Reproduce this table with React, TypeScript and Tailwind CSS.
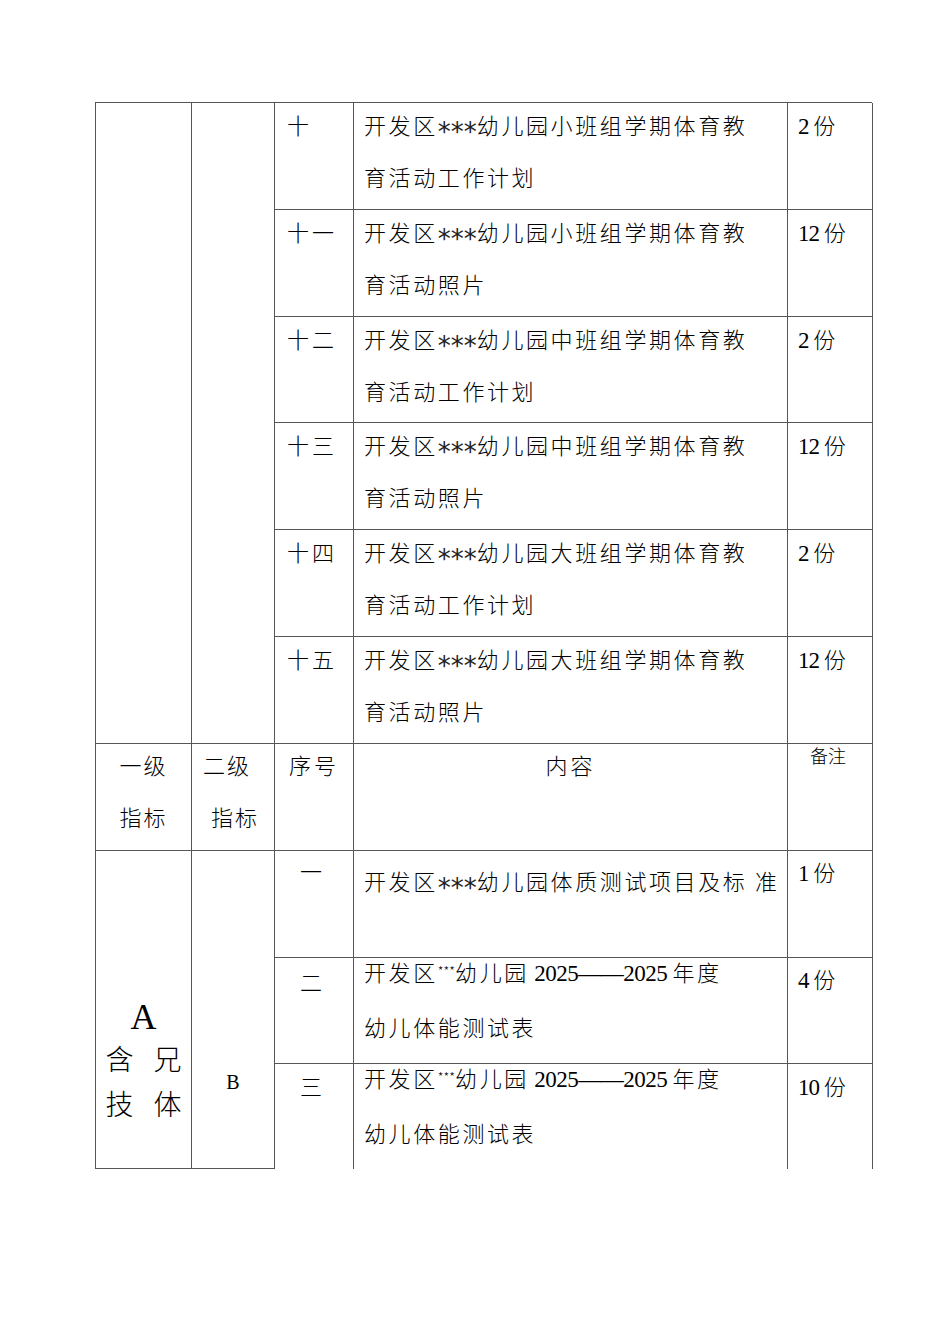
const cjk = "font-['Noto_Sans_CJK_SC',sans-serif] font-light";
const num = "font-['Liberation_Serif',serif]";
const cell = "border-r border-b border-[#555]";

const topRows = [
  { no: "十", head: "开发区", tail: "幼儿园小班组学期体育教", l2: "育活动工作计划", n: "2" },
  { no: "十一", head: "开发区", tail: "幼儿园小班组学期体育教", l2: "育活动照片", n: "12" },
  { no: "十二", head: "开发区", tail: "幼儿园中班组学期体育教", l2: "育活动工作计划", n: "2" },
  { no: "十三", head: "开发区", tail: "幼儿园中班组学期体育教", l2: "育活动照片", n: "12" },
  { no: "十四", head: "开发区", tail: "幼儿园大班组学期体育教", l2: "育活动工作计划", n: "2" },
  { no: "十五", head: "开发区", tail: "幼儿园大班组学期体育教", l2: "育活动照片", n: "12" },
];

function Stars() {
  return (
    <span className="inline-block translate-y-[7px] font-['DejaVu_Sans',sans-serif] text-[26px] font-normal leading-none tracking-normal text-[#222]">
      ***
    </span>
  );
}

function Count({ n }: { n: string }) {
  return (
    <span className="tracking-normal">
      <span className={`${num} text-[23px] tracking-[-1px]`}>{n}</span>
      <span className={cjk}> 份</span>
    </span>
  );
}

function YearLine() {
  return (
    <div>
      开发区<span className="align-top text-[13px] tracking-normal">***</span>幼儿园
      <span className={`${num} text-[23px] tracking-[-0.5px]`}> 2025——2025 </span>年度
    </div>
  );
}

export default function App() {
  return (
    <div className={`min-h-[1344px] w-[950px] bg-white pl-[95px] pt-[102px] text-[22px] text-black ${cjk}`}>
      <div className="grid w-[777px] grid-cols-[96px_83px_79px_434px_85px] grid-rows-[107px_107px_106px_107px_107px_107px_107px_107px_106px_105px] border-l border-t border-[#555]">
        {/* top section */}
        <div className={`${cell} row-span-6`} />
        <div className={`${cell} row-span-6`} />
        {topRows.map((r) => (
          <div key={r.no} className="contents">
            <div className={`${cell} pl-[12px] leading-[52px] tracking-[3px]`}>
              <div className="-mt-[5px]">{r.no}</div>
            </div>
            <div className={`${cell} pl-[10px] leading-[52px] tracking-[2.6px]`}>
              <div className="-mt-[5px]">
                <div>
                  {r.head}
                  <Stars />
                  {r.tail}
                </div>
                <div>{r.l2}</div>
              </div>
            </div>
            <div className={`${cell} pl-[10px] leading-[52px]`}>
              <div className="-mt-[5px]">
                <Count n={r.n} />
              </div>
            </div>
          </div>
        ))}

        {/* header row */}
        <div className={`${cell} text-center leading-[52px] tracking-[2px]`}>
          <div className="-mt-[6px]">
            <div>一级</div>
            <div>指标</div>
          </div>
        </div>
        <div className={`${cell} leading-[52px] tracking-[2px]`}>
          <div className="-mt-[6px] pl-[11px]">
            <div>二级</div>
            <div className="pl-[8px]">指标</div>
          </div>
        </div>
        <div className={`${cell} pl-[14px] leading-[52px] tracking-[3px]`}>
          <div className="-mt-[6px]">序号</div>
        </div>
        <div className={`${cell} text-center leading-[52px] tracking-[3px]`}>
          <div className="-mt-[6px]">内容</div>
        </div>
        <div className={`${cell} text-center text-[18px] leading-[26px]`}>
          <div className="-mt-[2px] pr-[4px]">备注</div>
        </div>

        {/* A / B cells */}
        <div className={`${cell} row-span-3 flex flex-col items-center pt-[148px]`}>
          <div className="font-['Liberation_Serif',serif] text-[36px] leading-[36px]">A</div>
          <div className="mt-px flex w-[76px] justify-between text-[28px] leading-[45px]">
            <span>含</span>
            <span>兄</span>
          </div>
          <div className="flex w-[76px] justify-between text-[28px] leading-[45px]">
            <span>技</span>
            <span>体</span>
          </div>
        </div>
        <div className={`${cell} row-span-3 pt-[212px] text-center`}>
          <span className="font-['Liberation_Serif',serif] text-[20px] leading-[24px]">B</span>
        </div>

        {/* row 一 */}
        <div className={`${cell} text-center leading-[38px]`}>
          <div className="pr-[6px]">一</div>
        </div>
        <div className={`${cell} pl-[10px] pt-[3px] leading-[52px] tracking-[2.6px]`}>
          开发区<Stars />幼儿园体质测试项目及标 准
        </div>
        <div className={`${cell} pl-[10px] leading-[40px]`}>
          <Count n="1" />
        </div>

        {/* row 二 */}
        <div className={`${cell} pt-[4px] text-center leading-[38px]`}>
          <div className="pr-[6px]">二</div>
        </div>
        <div className={`${cell} pl-[10px] leading-[52px] tracking-[2.6px]`}>
          <div className="-mt-[13px]">
            <YearLine />
            <div>幼儿体能测试表</div>
          </div>
        </div>
        <div className={`${cell} pl-[10px] leading-[40px]`}>
          <Count n="4" />
        </div>

        {/* row 三 */}
        <div className="border-r border-[#555] text-center leading-[42px]">
          <div className="pr-[6px]">三</div>
        </div>
        <div className="border-r border-[#555] pl-[10px] leading-[52px] tracking-[2.6px]">
          <div className="-mt-[13px]">
            <YearLine />
            <div>幼儿体能测试表</div>
          </div>
        </div>
        <div className="border-r border-[#555] pl-[10px] leading-[42px]">
          <Count n="10" />
        </div>
      </div>
    </div>
  );
}
